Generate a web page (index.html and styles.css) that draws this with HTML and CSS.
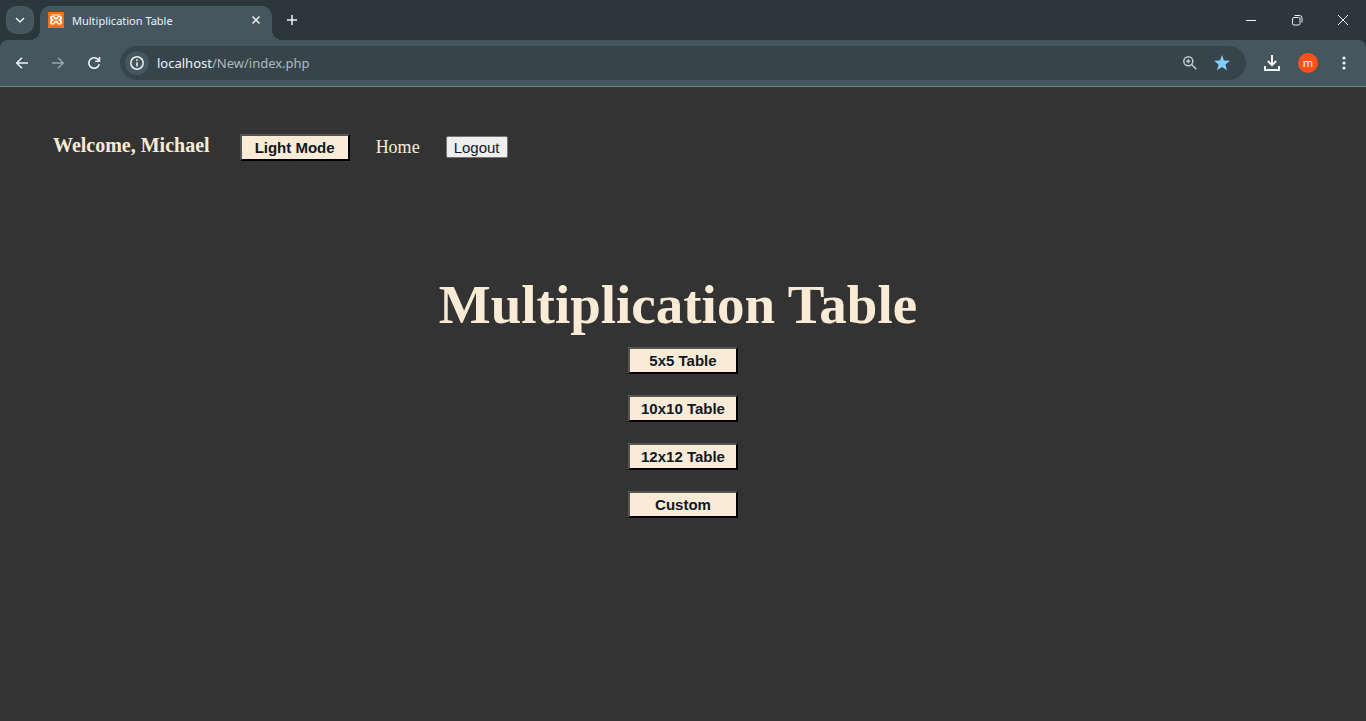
FILE: index.html
```html
<!DOCTYPE html>
<html lang="en">
<head>
<meta charset="utf-8">
<title>Multiplication Table</title>
<link rel="stylesheet" href="styles.css">
</head>
<body>
<header class="browser">
  <div class="tabstrip">
    <button class="tab-search" aria-label="Search tabs"><svg width="10" height="10" viewBox="0 0 10 10"><path d="M1 3 5 7 9 3" class="line"/></svg></button>
    <div class="tab">
      <svg class="favicon" width="16" height="16" viewBox="0 0 16 16"><rect width="16" height="16" rx="1" fill="#fb6d12"/><path d="M3.500 3H12.500" stroke="#fff" stroke-width="1"/><path d="M5.500 8C2 7.500 2 4.500 4.800 4.500C7 4.500 6.500 7 8 7S9 4.500 11.200 4.500C14 4.500 14 7.500 10.500 8C14 8.500 14 12 11.200 12C9 12 9.500 9.300 8 9.300S7 12 4.800 12C2 12 2 8.500 5.500 8Z" fill="none" stroke="#fff" stroke-width="1.700"/></svg>
      <span class="tab-title">Multiplication Table</span>
      <button class="icon-button small" aria-label="Close tab"><svg width="10" height="10" viewBox="0 0 10 10"><path d="M1.500 1.500 8.500 8.500M8.500 1.500 1.500 8.500" class="line"/></svg></button>
    </div>
    <button class="icon-button new-tab" aria-label="New tab"><svg width="12" height="12" viewBox="0 0 12 12"><path d="M6 1V11M1 6H11" class="line"/></svg></button>
    <div class="window-controls">
      <button class="window-button" aria-label="Minimize"><svg width="12" height="12" viewBox="0 0 12 12"><path d="M1 6.500H11" class="line thin"/></svg></button>
      <button class="window-button" aria-label="Restore"><svg width="12" height="12" viewBox="0 0 12 12"><rect x="1.500" y="3.500" width="7.500" height="7.500" rx="1.500" class="line thin"/><path d="M3.500 1.500H8.500A2.500 2.500 0 0 1 11 4V8.500" class="line thin"/></svg></button>
      <button class="window-button" aria-label="Close"><svg width="12" height="12" viewBox="0 0 12 12"><path d="M1 1 11 11M11 1 1 11" class="line thin"/></svg></button>
    </div>
  </div>
  <div class="toolbar">
    <button class="icon-button" aria-label="Back"><svg width="16" height="16" viewBox="0 0 16 16"><path d="M14 8H3M8 2.700 2.700 8 8 13.300" class="line"/></svg></button>
    <button class="icon-button faded" aria-label="Forward"><svg width="16" height="16" viewBox="0 0 16 16"><path d="M2 8H13M8 2.700 13.300 8 8 13.300" class="line"/></svg></button>
    <button class="icon-button" aria-label="Reload"><svg width="16" height="16" viewBox="0 0 16 16"><path d="M13.300 9.200A5.300 5.300 0 1 1 12.200 4.600L13.500 6M13.500 2V6.200H9.300" class="line"/></svg></button>
    <div class="omnibox">
      <button class="site-info" aria-label="View site information"><svg width="16" height="16" viewBox="0 0 16 16"><circle cx="8" cy="8" r="6.200" class="line"/><path d="M8 7.200V11.500M8 4.300V6" class="line"/></svg></button>
      <div class="address"><span class="host">localhost</span>/New/index.php</div>
      <button class="icon-button small" aria-label="Zoom"><svg width="16" height="16" viewBox="0 0 16 16"><circle cx="6.300" cy="6.300" r="4.500" class="line pale"/><path d="M9.800 9.800 14.300 14.300M6.300 4.300V8.300M4.300 6.300H8.300" class="line pale"/></svg></button>
      <button class="icon-button small" aria-label="Edit bookmark"><svg width="16" height="16" viewBox="0 0 16 16"><path d="M8 0 10 5.500 16 5.800 11.400 9.500 13 15.300 8 12 3 15.300 4.600 9.500 0 5.800 6 5.500Z" fill="#7fcffa"/></svg></button>
    </div>
    <div class="toolbar-end">
      <button class="icon-button" aria-label="Downloads"><svg width="16" height="16" viewBox="0 0 16 16"><path d="M8 0V10M3.800 6 8 10.200 12.200 6M1 11V15H15V11" class="line heavy"/></svg></button>
      <button class="profile" aria-label="Profile">m</button>
      <button class="icon-button" aria-label="Menu"><svg width="16" height="16" viewBox="0 0 16 16" fill="#eef3f5"><circle cx="8" cy="3" r="1.600"/><circle cx="8" cy="8" r="1.600"/><circle cx="8" cy="13" r="1.600"/></svg></button>
    </div>
  </div>
</header>
<nav class="nav">
  <h2 class="welcome">Welcome, Michael</h2>
  <button class="button">Light Mode</button>
  <a class="home" href="#">Home</a>
  <button class="logout">Logout</button>
</nav>
<main class="main">
  <h1 class="title">Multiplication Table</h1>
  <button class="button">5x5 Table</button>
  <button class="button">10x10 Table</button>
  <button class="button">12x12 Table</button>
  <button class="button">Custom</button>
</main>
</body>
</html>
```
FILE: styles.css
```css
* { box-sizing: border-box; }
body {
  margin: 0;
  background: #333;
  color: #faebd7;
  font-family: "Liberation Serif", "Times New Roman", serif;
}
button { font: inherit; padding: 0; border: 0; }
.browser {
  background: #2c373d;
  color: #eef3f5;
  font-family: "Noto Sans", "Segoe UI", sans-serif;
  border-bottom: 1px solid #71858e;
}
.line { fill: none; stroke: #eef3f5; stroke-width: 1.500; }
.thin { stroke-width: 1; }
.heavy { stroke-width: 2; }
.pale { stroke: #c2cbd0; }
.tabstrip { display: flex; height: 40px; padding-left: 6px; }
.tab-search {
  display: grid;
  place-items: center;
  width: 28px;
  height: 28px;
  margin-top: 6px;
  border-radius: 10px;
  background: #45565f;
}
.tab {
  position: relative;
  display: flex;
  align-items: center;
  gap: 8px;
  width: 232px;
  height: 34px;
  margin: 6px 0 0 6px;
  padding: 0 6px 6px 8px;
  border-radius: 10px 10px 0 0;
  background: #45565f;
}
.tab::before, .tab::after {
  content: "";
  position: absolute;
  bottom: 0;
  width: 10px;
  height: 10px;
}
.tab::before { right: 100%; background: radial-gradient(circle at 0 0, transparent 10px, #45565f 10px); }
.tab::after { left: 100%; background: radial-gradient(circle at 100% 0, transparent 10px, #45565f 10px); }
.tab-title { flex: 1; font-size: 11px; white-space: nowrap; }
.icon-button {
  display: grid;
  place-items: center;
  width: 28px;
  height: 28px;
  background: none;
}
.small { width: 20px; height: 20px; }
.new-tab { margin: 6px 0 0 6px; }
.faded { opacity: 0.5; }
.window-controls { display: flex; margin-left: auto; }
.window-button { display: grid; place-items: center; width: 46px; height: 40px; background: none; }
.toolbar {
  display: flex;
  align-items: center;
  gap: 8px;
  height: 46px;
  padding: 0 8px;
  border-radius: 8px 8px 0 0;
  background: #45565f;
}
.omnibox {
  flex: 1;
  display: flex;
  align-items: center;
  gap: 12px;
  height: 34px;
  margin-left: 4px;
  padding: 0 14px 0 5px;
  border-radius: 17px;
  background: #38444b;
}
.site-info {
  display: grid;
  place-items: center;
  width: 24px;
  height: 24px;
  border-radius: 50%;
  background: #45565f;
}
.address { flex: 1; margin-left: -4px; color: #b0babf; font-size: 13px; }
.host { color: #eef3f5; }
.toolbar-end { display: flex; align-items: center; gap: 12px; margin-left: 4px; }
.profile {
  width: 20px;
  height: 20px;
  border-radius: 50%;
  background: #fa5218;
  color: #fff;
  font-size: 11px;
  line-height: 20px;
}
.nav {
  display: flex;
  align-items: center;
  gap: 26px;
  padding: 46px 53px 0;
}
.welcome { margin: 0; padding: 0 4px 4px 0; font-size: 20px; line-height: 24px; }
.button {
  width: 110px;
  height: 27px;
  border: 2px outset #000;
  background: #faebd7;
  color: #10181e;
  font: bold 15px "Liberation Sans", Arial, sans-serif;
}
.home { color: inherit; font-size: 18px; text-decoration: none; }
.logout {
  height: 22px;
  padding: 0 7px;
  border: 1px solid #767676;
  border-radius: 2px;
  background: #efefef;
  color: #10181e;
  font: 15px "Liberation Sans", Arial, sans-serif;
}
.main {
  display: flex;
  flex-direction: column;
  align-items: center;
  gap: 21px;
  padding: 113px 0 40px;
}
.title { margin: 0 10px -10px 0; font-size: 55px; line-height: 62px; }
```
